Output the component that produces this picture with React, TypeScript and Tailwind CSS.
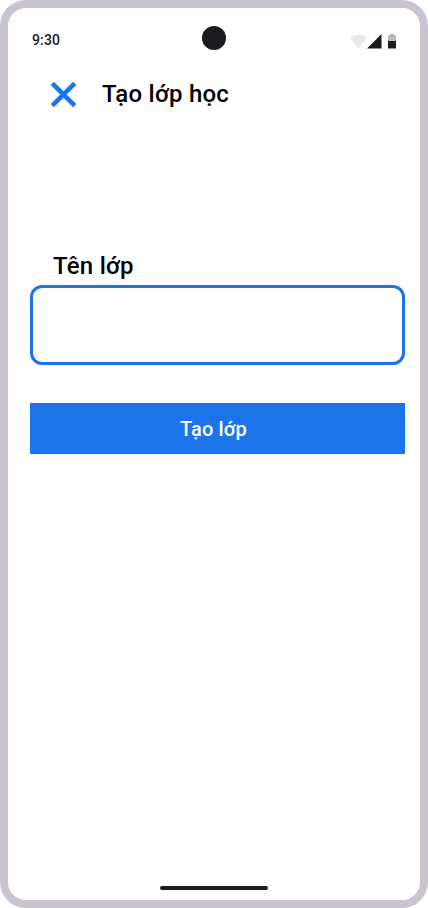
export default function App() {
  return (
    <div className="h-[908px] w-[428px] overflow-hidden bg-white font-['Roboto','Noto_Sans',sans-serif] text-black">
      <div className="flex h-full w-full flex-col rounded-[26px] border-8 border-[#cac4d0] bg-white">
        <header className="relative flex h-[52px] items-end justify-between px-6 pb-[10px] text-[#1d1b20]">
          <span className="text-sm leading-5 font-medium tracking-[0.14px]">9:30</span>
          <div className="absolute top-[18px] left-[194px] size-6 rounded-full bg-[#1d1b20]" />
          <svg className="h-[17px] w-[46px]" viewBox="0 0 46 17">
            <path d="M0 4.8Q8.5-1.8 17 4.8L8.5 15.5Z" fill="#1d1b20" fillOpacity=".1" />
            <path d="M17 15.5L31.5 1V15.5Z" fill="#1d1b20" />
            <path d="M38 8V3Q38 2 39 2H40V.8H44V2H45Q46 2 46 3V8Z" fill="#1d1b20" fillOpacity=".3" />
            <path d="M38 8H46V15.5H38Z" fill="#1d1b20" />
          </svg>
        </header>
        <div className="mt-2 flex h-[52px] items-center pl-[42px]">
          <svg className="size-[27px]" viewBox="0 0 27 27" fill="#1b74e9">
            <path d="M3.9 .7L13.5 10.3L23.1 .7L26.3 3.9L16.7 13.5L26.3 23.1L23.1 26.3L13.5 16.7L3.9 26.3L.7 23.1L10.3 13.5L.7 3.9Z" />
          </svg>
          <h1 className="ml-[25px] text-2xl leading-7 font-medium tracking-[0.24px]">Tạo lớp học</h1>
        </div>
        <main className="mt-[132px] flex flex-col pr-[15px] pl-[22px]">
          <label htmlFor="class-name" className="pl-[23px] text-2xl leading-7 font-medium tracking-[0.24px]">Tên lớp</label>
          <input id="class-name" className="mt-[5px] h-20 w-[375px] rounded-[12px] border-3 border-[#1b74e9] bg-white px-4 text-xl outline-none" />
          <button className="mt-[38px] h-[51px] w-[375px] bg-[#1b74e9] pr-2 text-xl font-medium tracking-[0.14px] text-white">Tạo lớp</button>
        </main>
        <div className="mt-auto mb-[10px] ml-[152px] h-1 w-[108px] rounded-full bg-[#1d1b20]" />
      </div>
    </div>
  );
}
